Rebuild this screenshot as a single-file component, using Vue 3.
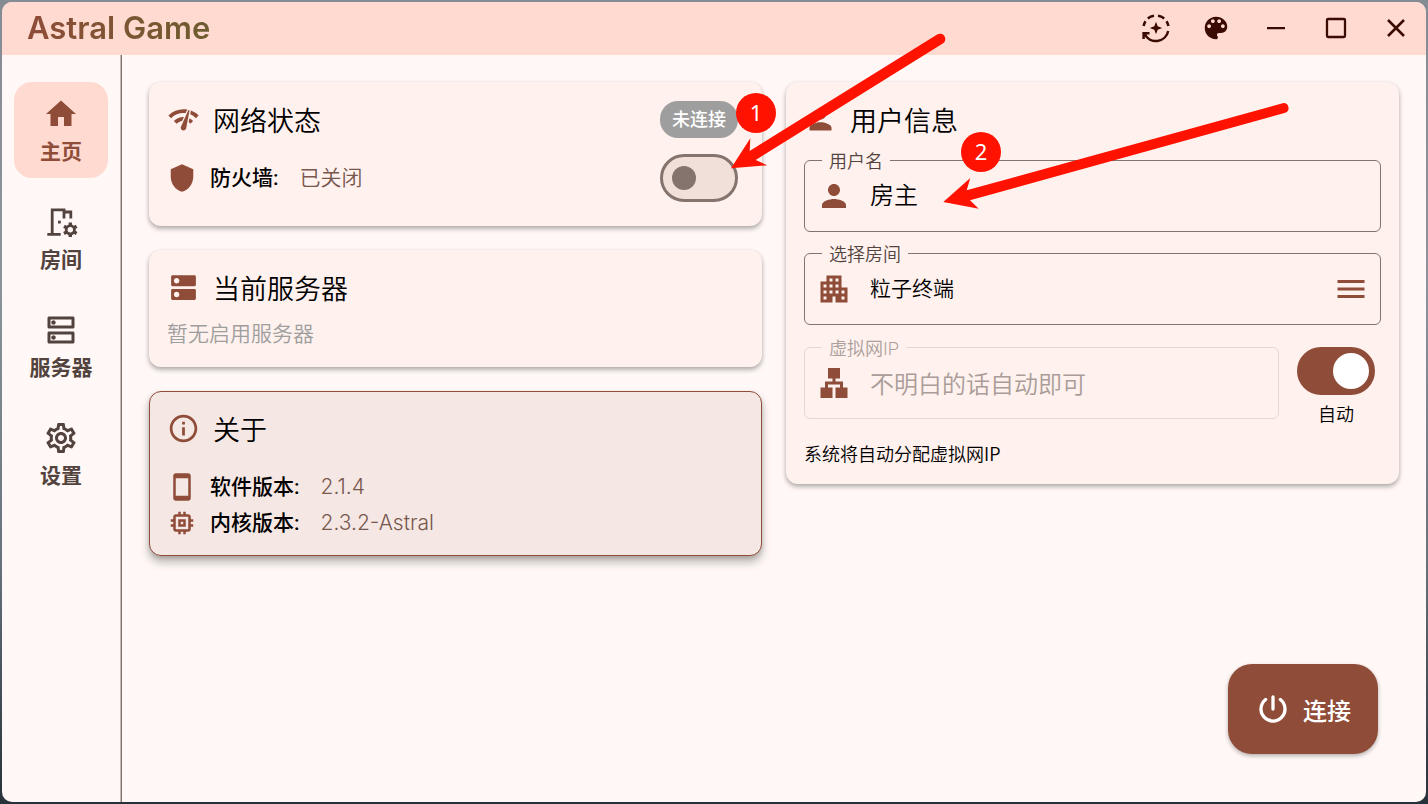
<script setup>
import { ref } from 'vue'

const icons = {
  home: 'M10 20v-6h4v6h5v-8h3L12 3 2 12h3v8z',
  settings: 'M19.43 12.98c.04-.32.07-.64.07-.98s-.03-.66-.07-.98l2.11-1.65c.19-.15.24-.42.12-.64l-2-3.46c-.09-.16-.26-.25-.44-.25-.06 0-.12.01-.17.03l-2.49 1c-.52-.4-1.08-.73-1.69-.98l-.38-2.65C14.46 2.18 14.25 2 14 2h-4c-.25 0-.46.18-.49.42l-.38 2.65c-.61.25-1.17.59-1.69.98l-2.49-1c-.06-.02-.12-.03-.18-.03-.17 0-.34.09-.43.25l-2 3.46c-.13.22-.07.49.12.64l2.11 1.65c-.04.32-.07.65-.07.98s.03.66.07.98l-2.11 1.65c-.19.15-.24.42-.12.64l2 3.46c.09.16.26.25.44.25.06 0 .12-.01.17-.03l2.49-1c.52.4 1.08.73 1.69.98l.38 2.65c.03.24.24.42.49.42h4c.25 0 .46-.18.49-.42l.38-2.65c.61-.25 1.17-.59 1.69-.98l2.49 1c.06.02.12.03.18.03.17 0 .34-.09.43-.25l2-3.46c.12-.22.07-.49-.12-.64l-2.11-1.65zm-1.98-1.71c.04.31.05.52.05.73s-.02.43-.05.73l-.14 1.13.89.7 1.08.84-.7 1.21-1.27-.51-1.04-.42-.9.68c-.43.32-.84.56-1.25.73l-1.06.43-.16 1.13-.2 1.35h-1.4l-.19-1.35-.16-1.13-1.06-.43c-.43-.18-.83-.41-1.23-.71l-.91-.7-1.06.43-1.27.51-.7-1.21 1.08-.84.89-.7-.14-1.13c-.03-.31-.05-.54-.05-.74s.02-.43.05-.73l.14-1.13-.89-.7-1.08-.84.7-1.21 1.27.51 1.04.42.9-.68c.43-.32.84-.56 1.25-.73l1.06-.43.16-1.13.2-1.35h1.39l.19 1.35.16 1.13 1.06.43c.43.18.83.41 1.23.71l.91.7 1.06-.43 1.27-.51.7 1.21-1.07.85-.89.7.14 1.13zM12 8c-2.21 0-4 1.79-4 4s1.79 4 4 4 4-1.79 4-4-1.79-4-4-4zm0 6c-1.1 0-2-.9-2-2s.9-2 2-2 2 .9 2 2-.9 2-2 2z',
  serverOutline: 'M19 15v4H5v-4h14m1-2H4c-.55 0-1 .45-1 1v6c0 .55.45 1 1 1h16c.55 0 1-.45 1-1v-6c0-.55-.45-1-1-1zM7 18.500c-.82 0-1.500-.67-1.500-1.500s.68-1.500 1.500-1.500 1.500.67 1.500 1.500-.67 1.500-1.500 1.500zM19 5v4H5V5h14m1-2H4c-.55 0-1 .45-1 1v6c0 .55.45 1 1 1h16c.55 0 1-.45 1-1V4c0-.55-.45-1-1-1zM7 8.500c-.82 0-1.500-.67-1.500-1.500S6.180 5.500 7 5.500s1.500.68 1.500 1.500S7.830 8.500 7 8.500z',
  palette: 'M12 3c-4.970 0-9 4.030-9 9s4.030 9 9 9c.83 0 1.500-.67 1.500-1.500 0-.39-.15-.74-.39-1.010-.23-.26-.38-.61-.38-.99 0-.83.67-1.500 1.500-1.500H16c2.760 0 5-2.240 5-5 0-4.420-4.030-8-9-8zm-5.500 9c-.83 0-1.500-.67-1.500-1.500S5.670 9 6.500 9 8 9.670 8 10.500 7.330 12 6.500 12zm3-4C8.670 8 8 7.330 8 6.500S8.670 5 9.500 5s1.500.67 1.500 1.500S10.330 8 9.500 8zm5 0c-.83 0-1.500-.67-1.500-1.500S13.670 5 14.500 5s1.500.67 1.500 1.500S15.330 8 14.500 8zm3 4c-.83 0-1.500-.67-1.500-1.500S16.670 9 17.500 9s1.500.67 1.500 1.500-.67 1.500-1.500 1.500z',
  network: 'M15.900 5c-.17 0-.32.09-.41.23l-.07.15-5.180 11.650c-.16.29-.26.61-.26.96 0 1.110.9 2.010 2.010 2.010.96 0 1.770-.68 1.960-1.590l.01-.03L16.400 5.500c0-.28-.22-.5-.5-.5zM1 9l2 2c2.880-2.880 6.790-4.080 10.530-3.620l1.190-2.680C9.890 3.840 4.740 5.270 1 9zm20 2l2-2c-1.640-1.640-3.550-2.820-5.590-3.570l-.53 2.820c1.500.62 2.900 1.530 4.120 2.750zm-4 4l2-2c-.8-.8-1.700-1.420-2.660-1.890l-.55 2.920c.42.27.83.59 1.210.97zM5 13l2 2c1.130-1.130 2.560-1.790 4.030-2l1.280-2.880c-2.630-.08-5.300.87-7.310 2.880z',
  shield: 'M12 1L3 5v6c0 5.550 3.840 10.740 9 12 5.160-1.260 9-6.450 9-12V5l-9-4z',
  server: 'M20 13H4c-.55 0-1 .45-1 1v6c0 .55.45 1 1 1h16c.55 0 1-.45 1-1v-6c0-.55-.45-1-1-1zM7 19c-1.100 0-2-.9-2-2s.9-2 2-2 2 .9 2 2-.9 2-2 2zM20 3H4c-.55 0-1 .45-1 1v6c0 .55.45 1 1 1h16c.55 0 1-.45 1-1V4c0-.55-.45-1-1-1zM7 9c-1.100 0-2-.9-2-2s.9-2 2-2 2 .9 2 2-.9 2-2 2z',
  info: 'M11 7h2v2h-2zm0 4h2v6h-2zm1-9C6.480 2 2 6.480 2 12s4.480 10 10 10 10-4.480 10-10S17.520 2 12 2zm0 18c-4.410 0-8-3.590-8-8s3.590-8 8-8 8 3.590 8 8-3.590 8-8 8z',
  phone: 'M17 1H7c-1.100 0-2 .9-2 2v18c0 1.100.9 2 2 2h10c1.100 0 2-.9 2-2V3c0-1.100-.9-2-2-2zm0 18H7V5h10v14z',
  chip: 'M15 9H9v6h6V9zm-2 4h-2v-2h2v2zm8-2V9h-2V7c0-1.100-.9-2-2-2h-2V3h-2v2h-2V3H9v2H7c-1.100 0-2 .9-2 2v2H3v2h2v2H3v2h2v2c0 1.100.9 2 2 2h2v2h2v-2h2v2h2v-2h2c1.100 0 2-.9 2-2v-2h2v-2h-2v-2h2zm-4 6H7V7h10v10z',
  person: 'M12 12c2.210 0 4-1.790 4-4s-1.790-4-4-4-4 1.790-4 4 1.790 4 4 4zm0 2c-2.670 0-8 1.340-8 4v2h16v-2c0-2.660-5.330-4-8-4z',
  building: 'M17 11V3H7v4H3v14h8v-4h2v4h8V11h-4zM7 19H5v-2h2v2zm0-4H5v-2h2v2zm0-4H5V9h2v2zm4 4H9v-2h2v2zm0-4H9V9h2v2zm0-4H9V5h2v2zm4 8h-2v-2h2v2zm0-4h-2V9h2v2zm0-4h-2V5h2v2zm4 12h-2v-2h2v2zm0-4h-2v-2h2v2z',
  lan: 'M13 22h8v-7h-3v-4h-5V9h3V2H8v7h3v2H6v4H3v7h8v-7H8v-2h8v2h-3v7z',
  menu: 'M3 18h18v-2H3v2zm0-5h18v-2H3v2zm0-7v2h18V6H3z'
}

const navItems = [
  { id: 'home', label: '主页', icon: icons.home },
  { id: 'rooms', label: '房间', icon: null },
  { id: 'servers', label: '服务器', icon: icons.serverOutline },
  { id: 'settings', label: '设置', icon: icons.settings }
]

const versions = [
  { label: '软件版本:', value: '2.1.4', icon: icons.phone },
  { label: '内核版本:', value: '2.3.2-Astral', icon: icons.chip }
]

const current = ref('home')
const firewall = ref(false)
const autoIp = ref(true)
const userName = ref('房主')
const room = ref('粒子终端')
const ip = ref('')
</script>

<template>
  <div class="desktop">
    <div class="window">
      <header class="titlebar">
        <h1 class="brand">Astral Game</h1>
        <div class="tools">
          <button type="button" aria-label="检查更新">
            <svg class="i30" viewBox="-15 -15 30 30" fill="none" stroke="currentColor" stroke-width="2.500">
              <path d="M-12.400 -2A12.500 12.500 0 0 1 -10.500 -6.800M-8.200 -9.500A12.500 12.500 0 0 1 -2 -12.300M2 -12.300A12.500 12.500 0 0 1 8.200 -9.500M10.500 -6.800A12.500 12.500 0 0 1 12.400 -2M12.200 3A12.500 12.500 0 0 1 -11.300 6M-12.400 11V5.200H-6.500" />
              <path d="M0 -6.200L1.700 -1.700 6.200 0 1.700 1.700 0 6.200 -1.700 1.700 -6.200 0 -1.700 -1.700z" fill="currentColor" stroke="none" />
            </svg>
          </button>
          <button type="button" aria-label="主题">
            <svg class="i30" viewBox="0 0 24 24"><path :d="icons.palette" /></svg>
          </button>
          <button type="button" aria-label="最小化">
            <svg class="i30" viewBox="0 0 30 30"><path d="M6 14h18v2.300H6z" /></svg>
          </button>
          <button type="button" aria-label="最大化">
            <svg class="i30" viewBox="0 0 30 30" fill="none" stroke="currentColor" stroke-width="2.300"><rect x="6" y="6" width="18" height="18" rx="1" /></svg>
          </button>
          <button type="button" aria-label="关闭">
            <svg class="i30" viewBox="0 0 30 30" fill="none" stroke="currentColor" stroke-width="2.500"><path d="M7 7L23 23M23 7L7 23" /></svg>
          </button>
        </div>
      </header>

      <div class="body">
        <nav class="sidebar">
          <button
            v-for="item in navItems"
            :key="item.id"
            type="button"
            class="nav-item"
            :class="{ active: current === item.id }"
            @click="current = item.id"
          >
            <svg v-if="item.icon" class="i36" viewBox="0 0 24 24"><path :d="item.icon" /></svg>
            <svg v-else class="i36" viewBox="0 0 36 36" fill="none" stroke="currentColor" stroke-width="2.800">
              <path d="M4.300 30.300H17.700M9.200 30V5.800H21V14.500M21 8H27.800V14.500" />
              <rect x="15" y="16.700" width="2.800" height="2.800" fill="currentColor" stroke="none" />
              <circle cx="27.300" cy="25.800" r="4.100" stroke-width="2.800" />
              <path d="M27.300 18.500v3M27.300 30v3M21 22.200l2.600 1.500M31 28l2.600 1.500M21 29.500l2.600-1.500M31 23.700l2.600-1.500" stroke-width="3.400" />
            </svg>
            <span>{{ item.label }}</span>
          </button>
        </nav>

        <main class="content">
          <div class="column">
            <section class="card status">
              <div class="card-head">
                <svg class="i33" viewBox="0 0 24 24"><path :d="icons.network" /></svg>
                <h2>网络状态</h2>
                <span class="badge">未连接</span>
              </div>
              <div class="row">
                <svg class="i30" viewBox="0 0 24 24"><path :d="icons.shield" /></svg>
                <label class="key" for="firewall">防火墙:</label>
                <span class="value">已关闭</span>
                <input id="firewall" v-model="firewall" class="switch" type="checkbox" />
              </div>
            </section>

            <section class="card servers">
              <div class="card-head">
                <svg class="i33" viewBox="0 0 24 24"><path :d="icons.server" /></svg>
                <h2>当前服务器</h2>
              </div>
              <p class="empty">暂无启用服务器</p>
            </section>

            <section class="card about">
              <div class="card-head">
                <svg class="i33" viewBox="0 0 24 24"><path :d="icons.info" /></svg>
                <h2>关于</h2>
              </div>
              <div class="rows">
                <div v-for="v in versions" :key="v.label" class="row">
                  <svg class="i30" viewBox="0 0 24 24"><path :d="v.icon" /></svg>
                  <span class="key">{{ v.label }}</span>
                  <span class="value">{{ v.value }}</span>
                </div>
              </div>
            </section>
          </div>

          <div class="column">
            <section class="card user">
              <div class="card-head">
                <svg class="i33" viewBox="0 0 24 24"><path :d="icons.person" /></svg>
                <h2>用户信息</h2>
              </div>
              <div class="fields">
                <div class="field">
                  <label for="user-name">用户名</label>
                  <svg class="i36" viewBox="0 0 24 24"><path :d="icons.person" /></svg>
                  <input id="user-name" v-model="userName" type="text" />
                </div>
                <div class="field room">
                  <label for="room">选择房间</label>
                  <svg class="i36" viewBox="0 0 24 24"><path :d="icons.building" /></svg>
                  <input id="room" v-model="room" type="text" readonly />
                  <button type="button" aria-label="房间列表">
                    <svg class="i36" viewBox="0 0 24 24"><path :d="icons.menu" /></svg>
                  </button>
                </div>
                <div class="ip-row">
                  <div class="field" :class="{ disabled: autoIp }">
                    <label for="ip">虚拟网IP</label>
                    <svg class="i36" viewBox="0 0 24 24"><path :d="icons.lan" /></svg>
                    <input id="ip" v-model="ip" type="text" placeholder="不明白的话自动即可" :disabled="autoIp" />
                  </div>
                  <div class="auto">
                    <input id="auto-ip" v-model="autoIp" class="switch" type="checkbox" />
                    <label for="auto-ip">自动</label>
                  </div>
                </div>
              </div>
              <p class="hint">系统将自动分配虚拟网IP</p>
            </section>
          </div>
        </main>
      </div>

      <button type="button" class="fab">
        <svg class="i36" viewBox="0 0 24 24" fill="none" stroke="currentColor" stroke-width="2.200" stroke-linecap="round">
          <path d="M12 4V12M7.100 5.700A8 8 0 1 0 16.900 5.700" />
        </svg>
        <span>连接</span>
      </button>
    </div>

    <svg class="notes" width="1300" height="220" viewBox="0 0 1300 220">
      <path d="M937.200 34.500L749.700 151 750.300 138.300 731 168.300 767.300 165.300 755.700 160 942.800 43.500A5.300 5.300 0 0 0 937.200 34.500z" />
      <path d="M1282.700 103.200L966.700 190.300 970.300 178 943.300 202 978.700 208.700 970 200.300 1285.300 112.800A5 5 0 0 0 1282.700 103.200z" />
      <circle cx="756" cy="113" r="20" />
      <circle cx="981" cy="152" r="20" />
      <text x="756" y="121">1</text>
      <text x="981" y="160">2</text>
    </svg>
  </div>
</template>

<style>
body {
  margin: 0;
}
</style>

<style scoped>
* {
  box-sizing: border-box;
}

.desktop {
  position: relative;
  display: flex;
  min-height: 100vh;
  padding: 2px;
  background: linear-gradient(180deg, #858b93 0%, #8b949c 35%, #66727c 70%, #26313a 100%);
  font-family: Roboto, "Noto Sans CJK SC", sans-serif;
  font-size: 21px;
  font-weight: 350;
  color: #000;
}

.window {
  position: relative;
  flex: 1;
  min-width: 0;
  display: flex;
  flex-direction: column;
  overflow: hidden;
  border-radius: 10px;
  background: #fff8f6;
}

h1, h2, p {
  margin: 0;
}

button {
  padding: 0;
  border: 0;
  background: none;
  color: inherit;
  font: inherit;
  cursor: pointer;
}

svg {
  display: block;
  flex: none;
  fill: currentColor;
}

svg[fill="none"] {
  fill: none;
}

.i30 { width: 30px; height: 30px; }
.i33 { width: 33px; height: 33px; }
.i36 { width: 36px; height: 36px; }

.titlebar {
  display: flex;
  align-items: center;
  justify-content: space-between;
  height: 53px;
  padding: 0 0 1px 25px;
  background: #ffdad1;
}

.brand {
  font-family: Inter, sans-serif;
  font-size: 31px;
  font-weight: 600;
  line-height: 38px;
  background: linear-gradient(90deg, #8f4c38, #6c5d2f);
  background-clip: text;
  -webkit-background-clip: text;
  color: transparent;
}

.tools {
  display: flex;
  color: #3a0b01;
}

.tools button {
  display: flex;
  align-items: center;
  justify-content: center;
  width: 60px;
  height: 52px;
}

.body {
  flex: 1;
  display: flex;
}

.sidebar {
  display: flex;
  flex-direction: column;
  gap: 12px;
  width: 119px;
  padding: 27px 12px;
  border-right: 1px solid #c4b9b5;
}

.nav-item {
  display: flex;
  flex-direction: column;
  align-items: center;
  gap: 6px;
  padding: 14px 0 12px;
  border-radius: 18px;
  color: #53433f;
  font-weight: 700;
  line-height: 28px;
}

.nav-item.active {
  background: #ffdad1;
  color: #8f4c38;
}

.content {
  flex: 1;
  display: grid;
  grid-template-columns: 1fr 1fr;
  align-items: start;
  gap: 24px;
  padding: 27px;
  border-left: 1px solid #85736e;
}

.column {
  display: flex;
  flex-direction: column;
  gap: 24px;
  min-width: 0;
}

.card {
  padding: 18px;
  border-radius: 12px;
  background: #fff1ed;
  box-shadow: 0 3px 5px rgba(0, 0, 0, 0.26), 0 1px 4px rgba(0, 0, 0, 0.1);
}

.card svg {
  color: #8f4c38;
}

.card-head {
  display: flex;
  align-items: center;
  gap: 13px;
  height: 39px;
}

.card-head h2 {
  font-family: "Noto Sans CJK SC", sans-serif;
  font-size: 27px;
  font-weight: 350;
  line-height: 39px;
}

.badge {
  margin-left: auto;
  margin-right: 6px;
  padding: 0 12px;
  border-radius: 18px;
  background: #9e9e9e;
  color: #fff;
  font-size: 18px;
  font-weight: 500;
  line-height: 37px;
}

.row {
  display: flex;
  align-items: center;
  line-height: 30px;
}

.key {
  margin-left: 13px;
  font-weight: 500;
}

.value {
  margin-left: 21px;
  color: #77574e;
  font-family: Inter, "Noto Sans CJK SC", sans-serif;
}

.status {
  padding-bottom: 24px;
}

.status .row {
  margin-top: 15px;
  padding-right: 6px;
}

.status .switch {
  margin-left: auto;
}

.empty {
  margin-top: 12px;
  color: #9e9e9e;
  line-height: 30px;
}

.about {
  padding: 17px;
  border: 1px solid #8f4c38;
  background: #f5e7e3;
  box-shadow: 0 6px 10px rgba(0, 0, 0, 0.28), 0 2px 4px rgba(0, 0, 0, 0.12);
}

.rows {
  display: flex;
  flex-direction: column;
  gap: 6px;
  margin-top: 24px;
}

.switch {
  appearance: none;
  display: flex;
  align-items: center;
  width: 78px;
  height: 48px;
  margin: 0;
  padding: 0 9px;
  border: 3px solid #85736e;
  border-radius: 24px;
  background: #f1dfda;
  cursor: pointer;
}

.switch::before {
  content: "";
  width: 24px;
  height: 24px;
  border-radius: 50%;
  background: #85736e;
}

.switch:checked {
  justify-content: flex-end;
  padding: 0 3px;
  border-color: #8f4c38;
  background: #8f4c38;
}

.switch:checked::before {
  width: 36px;
  height: 36px;
  background: #fff;
}

.fields {
  display: flex;
  flex-direction: column;
  gap: 21px;
  margin-top: 21px;
}

.field {
  position: relative;
  flex: 1;
  display: flex;
  align-items: center;
  gap: 18px;
  height: 72px;
  min-height: 72px;
  padding: 0 11px;
  border: 1px solid #85736e;
  border-radius: 6px;
}

.field label {
  position: absolute;
  top: -12px;
  left: 17px;
  padding: 0 7px;
  background: #fff1ed;
  color: #53433f;
  font-size: 18px;
  line-height: 26px;
}

.field input {
  flex: 1;
  min-width: 0;
  padding: 0;
  border: 0;
  outline: 0;
  background: none;
  color: #000;
  font: inherit;
  font-size: 24px;
  line-height: 36px;
}

.room input {
  font-size: 21px;
}

.field.disabled {
  border-color: #e5d7d3;
}

.field.disabled label {
  color: #aa9f9c;
}

.field input::placeholder {
  color: #aa9c98;
  opacity: 1;
}

.ip-row {
  display: flex;
  align-items: flex-start;
  gap: 18px;
  padding-top: 1px;
}

.ip-row .field input {
  font-family: "Noto Sans CJK SC", sans-serif;
}

.auto {
  display: flex;
  flex-direction: column;
  align-items: center;
  gap: 6px;
  margin-right: 6px;
  font-size: 18px;
  line-height: 24px;
}

.hint {
  margin-top: 15px;
  font-size: 18px;
  line-height: 26px;
}

.auto label,
.hint {
  font-family: "Noto Sans CJK SC", sans-serif;
}

.fab {
  position: absolute;
  right: 48px;
  bottom: 48px;
  display: flex;
  align-items: center;
  gap: 12px;
  height: 90px;
  padding: 0 27px;
  border-radius: 24px;
  background: #8f4c38;
  box-shadow: 0 2px 4px rgba(0, 0, 0, 0.3);
  color: #fff;
  font-size: 24px;
  font-weight: 500;
}

.notes {
  position: absolute;
  top: 0;
  left: 0;
  fill: #ff1200;
  pointer-events: none;
}

.notes text {
  fill: #fff;
  font-family: "Noto Sans", sans-serif;
  font-size: 22px;
  font-weight: 400;
  text-anchor: middle;
}
</style>
